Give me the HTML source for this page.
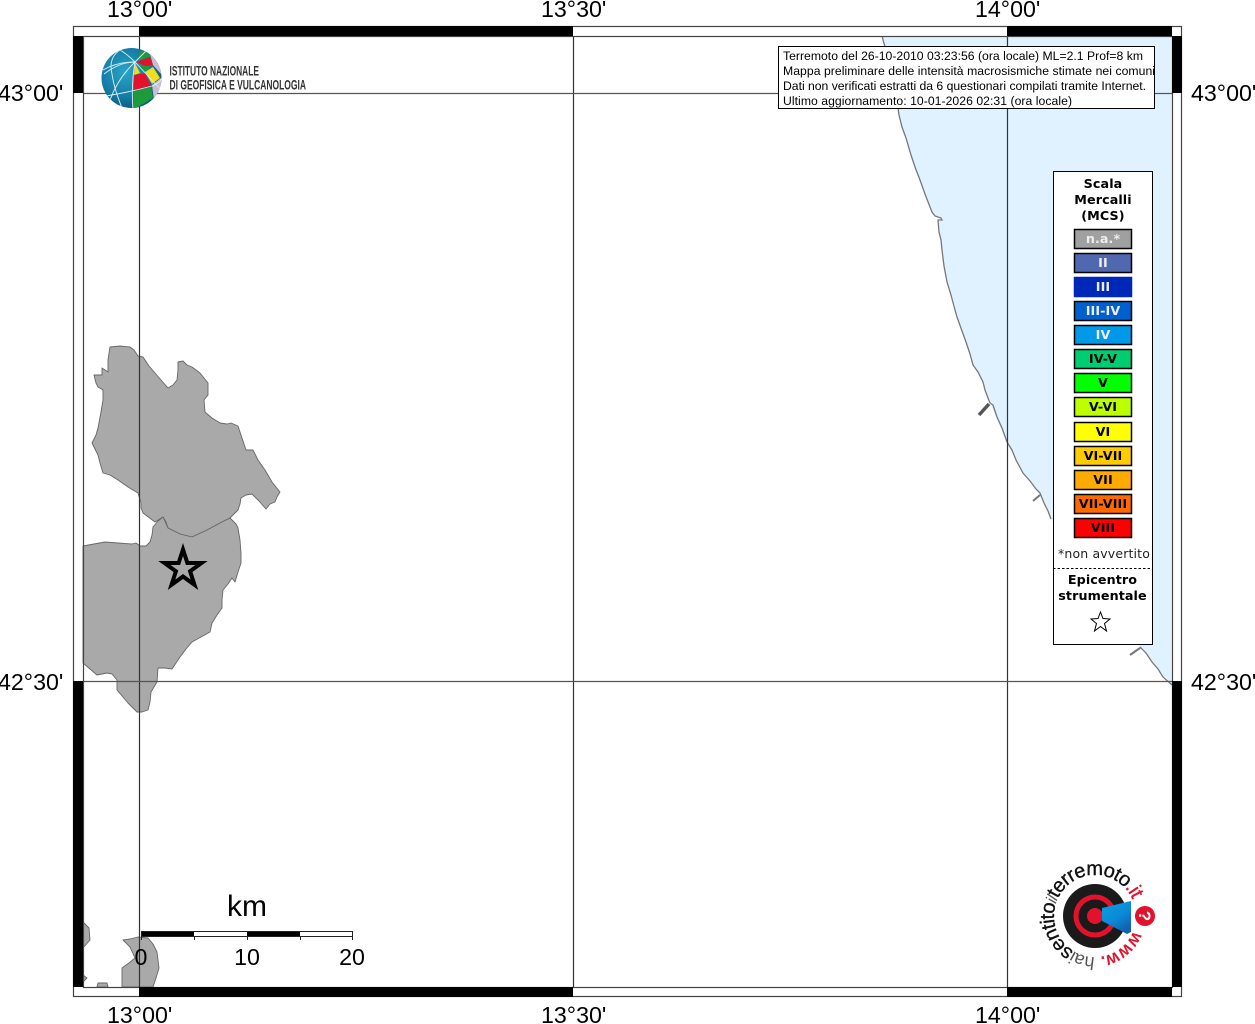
<!DOCTYPE html>
<html><head><meta charset="utf-8"><style>
html,body{margin:0;padding:0;background:#fff;width:1255px;height:1024px;overflow:hidden}
svg{display:block;filter:blur(.3px)}
.t{font-family:"Liberation Sans",Arial,sans-serif;font-size:23.2px;fill:#000}
.i{font-family:"Liberation Sans",Arial,sans-serif;font-size:12.2px;fill:#000}
.l{font-family:"DejaVu Sans",sans-serif;font-size:12.7px;font-weight:bold;text-anchor:middle;letter-spacing:.1px;fill:#000}
.w{fill:#eee}
.s{stroke:#000;stroke-width:1.5}
</style></head><body>
<svg width="1255" height="1024" viewBox="0 0 1255 1024" xmlns="http://www.w3.org/2000/svg">
<defs>
<radialGradient id="g" cx=".4" cy=".4" r=".7"><stop offset="0" stop-color="#2ba4c8"/><stop offset=".6" stop-color="#137ba5"/><stop offset="1" stop-color="#0b4d70"/></radialGradient>
<linearGradient id="b" x1="0" y1="0" x2=".6" y2="1"><stop offset="0" stop-color="#0aa0e0"/><stop offset=".6" stop-color="#0a8ad8"/><stop offset="1" stop-color="#1560b0"/></linearGradient>
<clipPath id="gc"><circle cx="131.500" cy="78" r="30"/></clipPath>
<clipPath id="ic"><rect x="779" y="47" width="376" height="61"/></clipPath>
<path id="arc" d="M1095 957A41 41 0 1 1 1095 875A41 41 0 1 1 1095 957"/>
</defs>
<!-- sea -->
<polygon fill="#e0f2ff" points="882,36 1172,36 1172,685 1140,647 1051,519 1040,493 1023,473 1007,442 990,403 983,382 973,365 957,317 947,282 942,250 938,220 942,219 935,216 930,207 915,167 902,127 898,108 885,47"/>
<polyline fill="none" stroke="#777" stroke-width="1.3" points="882,36 885,47 898,108 899,115 902,127 906,138 911,155 915,167 920,180 925,194 930,207 932,212 935,216 941,218 942,220 938,220 939,232 941,240 942,250 944,266 947,282 951,295 955,310 957,317 962,331 966,342 970,354 973,365 978,372 983,382 985,390 988,398 990,403 993,405 997,417 1002,428 1007,442 1012,450 1016,460 1023,473 1030,481 1036,489 1040,493 1044,503 1048,511 1051,519"/>
<polyline fill="none" stroke="#777" stroke-width="1.3" points="1140,647 1146,653 1152,662 1158,669 1163,677 1172,685"/>
<path d="M979 415L989 404" stroke="#555" stroke-width="3.5" fill="none"/>
<path d="M1033 501L1040 495M1130 655L1140 648" stroke="#777" stroke-width="2" fill="none"/>
<!-- provinces -->
<g fill="#a9a9a9" stroke="#666" stroke-width=".9" stroke-linejoin="round">
<polygon points="110,347 120,346 130,347 134,350 138,356 143,357 149,366 155,373 161,380 168,388 173,385 177,380 178,370 178,362 183,361 187,365 192,367 200,373 204,378 208,383 208,389 208,395 204,400 205,412 212,418 220,423 227,424 231,423 238,426 242,438 246,450 250,450 253,450 258,460 265,470 272,482 280,492 277,497 275,502 270,504 266,509 259,501 252,494 246,495 241,498 240,504 238,510 230,518 222,522 207,530 192,537 180,534 168,528 166,522 163,517 155,522 143,513 141,508 141,503 138,493 128,487 118,480 110,475 103,473 100,463 98,455 92,443 96,435 98,428 101,412 103,400 103,390 98,387 96,383 94,375 102,375 102,368 108,372 108,360"/>
<polygon points="83,546 94,544 105,542 118,543 132,544 136,543 140,546 146,546 150,542 152,535 153,527 158,521 163,517 168,528 180,534 192,537 207,530 222,522 230,518 236,524 238,528 240,540 241,553 241,563 238,572 235,582 232,578 228,584 223,590 222,600 222,608 217,615 212,623 210,632 201,637 192,642 186,649 180,657 172,669 165,668 158,668 157,682 151,692 150,702 148,710 142,712 137,712 128,703 117,690 117,680 112,674 107,673 97,675 90,669 83,663"/>
<polygon points="123,940 130,939 138,937 148,938 153,944 157,952 159,968 156,978 153,987 122,987 122,968 129,963 135,958 130,947"/>
<polygon points="83,922 89,928 90,940 83,948"/>
<polygon points="83,975 87,978 83,982"/>
<polygon points="97,987 98,983 107,983 108,987"/>
</g>
<!-- grid -->
<path d="M139.500 36V987M573.500 36V987M1007.500 36V987" stroke="#333" stroke-width="1.2" fill="none"/>
<path d="M83 93.500H1172M83 681.500H1172" stroke="#555" stroke-width="1.2" fill="none"/>
<!-- frame -->
<rect x="73.500" y="26.500" width="1108" height="970" fill="none" stroke="#444" stroke-width="1.2"/>
<rect x="83.500" y="36.500" width="1089" height="951" fill="none" stroke="#444" stroke-width="1.2"/>
<g fill="#000">
<rect x="139" y="26" width="434" height="10"/><rect x="1007" y="26" width="165" height="10"/>
<rect x="139" y="987" width="434" height="10"/><rect x="1007" y="987" width="165" height="10"/>
<rect x="73" y="36" width="10" height="57"/><rect x="73" y="681" width="10" height="306"/>
<rect x="1172" y="36" width="10" height="57"/><rect x="1172" y="681" width="10" height="306"/>
</g>
<!-- labels -->
<g class="t">
<text x="107" y="17" class="t">13°00'</text><text x="541" y="17" class="t">13°30'</text><text x="975" y="17" class="t">14°00'</text>
<text x="107" y="1023" class="t">13°00'</text><text x="541" y="1023" class="t">13°30'</text><text x="975" y="1023" class="t">14°00'</text>
<text x="-2" y="101" class="t">43°00'</text><text x="-2" y="690" class="t">42°30'</text>
<text x="1191" y="101" class="t">43°00'</text><text x="1191" y="690" class="t">42°30'</text>
</g>
<!-- star -->
<polygon points="183,549.500 187.380,562.970 201.550,562.970 190.090,571.300 194.460,584.780 183,576.450 171.540,584.780 175.910,571.300 164.450,562.970 178.620,562.970" fill="none" stroke="#000" stroke-width="4" stroke-miterlimit="10"/>
<!-- scale -->
<rect x="141" y="931" width="53" height="6" fill="#000"/><rect x="247" y="931" width="53" height="6" fill="#000"/>
<path d="M141 931.500H352.500V940M141 936.500H352M141.500 931V940M194.500 936V940M247.500 936V940M300.500 936V940" stroke="#222" stroke-width="1" fill="none"/>
<text x="247" y="916" text-anchor="middle" style="font-family:'Liberation Sans',sans-serif;font-size:30px" fill="#000">km</text>
<g style="font-family:'Liberation Sans',sans-serif;font-size:23.200px" text-anchor="middle" fill="#000">
<text x="141" y="965">0</text><text x="247" y="965">10</text><text x="352" y="965">20</text>
</g>
<!-- logo INGV -->
<circle cx="131.500" cy="78" r="30" fill="url(#g)"/>
<g clip-path="url(#gc)">
<polygon fill="#1e9a3c" points="136,61 142,49 151,56 146,58"/>
<polygon fill="#e3122c" points="136,62 150,57 153,65 145,66"/>
<polygon fill="#f2dd1c" points="135,63 140,73 134,75"/>
<polygon fill="#1e9a3c" points="140,66 150,66 145,72 142,72"/>
<polygon fill="#f2dd1c" points="145,72 153,67 160,78 152,84"/>
<polygon fill="#e3122c" points="134,75 145,73 151,86 134,90"/>
<polygon fill="#1e9a3c" points="134,91 151,87 153,98 133,110"/>
<polygon fill="#c9bdd0" points="150,54 160,60 162,75 153,65"/>
<polygon fill="#c9bdd0" points="161,78 152,85 154,100 163,87"/>
<g fill="none" stroke="#d8f0f4" stroke-width=".9">
<path d="M135 62Q125 52 116 48M135 62Q117 62 103 70M135 62Q118 78 110 100M135 62Q131 85 133 110"/>
<path d="M120 50Q108 58 112 74Q114 88 122 108M104 74Q120 62 135 62M106 96Q130 92 152 86Q160 83 162 78"/>
<path d="M135 62L150 47M135 62L163 92"/>
</g>
</g>
<g fill="#333" style="font-family:'Liberation Sans',sans-serif;font-size:14px;font-weight:bold">
<text x="169.500" y="75.500" textLength="89.500" lengthAdjust="spacingAndGlyphs">ISTITUTO NAZIONALE</text>
<text x="169.500" y="89.500" textLength="136.500" lengthAdjust="spacingAndGlyphs">DI GEOFISICA E VULCANOLOGIA</text>
</g>
<!-- info box -->
<rect x="778.500" y="46.500" width="376" height="62" fill="#fff" stroke="#000" stroke-width="1"/>
<g class="i" clip-path="url(#ic)">
<text class="i" x="783" y="60" textLength="360">Terremoto del 26-10-2010 03:23:56 (ora locale) ML=2.1 Prof=8 km</text>
<text class="i" x="783" y="75" textLength="372">Mappa preliminare delle intensità macrosismiche stimate nei comuni</text>
<text class="i" x="783" y="90" textLength="363">Dati non verificati estratti da 6 questionari compilati tramite Internet.</text>
<text class="i" x="783" y="105" textLength="289">Ultimo aggiornamento: 10-01-2026 02:31 (ora locale)</text>
</g>
<!-- legend -->
<rect x="1053.500" y="171.500" width="99" height="473" fill="#fff" stroke="#000" stroke-width="1"/>
<text class="l" x="1103" y="188">Scala</text><text class="l" x="1103" y="204">Mercalli</text><text class="l" x="1103" y="220">(MCS)</text>
<g class="s">
<rect x="1074.500" y="229.500" width="57" height="19" fill="#a0a0a0"/>
<rect x="1074.500" y="253.500" width="57" height="19" fill="#5068b0"/>
<rect x="1074.500" y="277.500" width="57" height="19" fill="#0028b8" stroke="#0028b8"/>
<rect x="1074.500" y="301.500" width="57" height="19" fill="#0060d0"/>
<rect x="1074.500" y="325.500" width="57" height="19" fill="#0098e8"/>
<rect x="1074.500" y="349.500" width="57" height="19" fill="#00cc70"/>
<rect x="1074.500" y="373.500" width="57" height="19" fill="#00ff00"/>
<rect x="1074.500" y="397.500" width="57" height="19" fill="#bbff00"/>
<rect x="1074.500" y="422.500" width="57" height="19" fill="#ffff00"/>
<rect x="1074.500" y="446.500" width="57" height="19" fill="#ffcc00"/>
<rect x="1074.500" y="470.500" width="57" height="19" fill="#ffaa00"/>
<rect x="1074.500" y="494.500" width="57" height="19" fill="#ff6a00"/>
<rect x="1074.500" y="518.500" width="57" height="19" fill="#ff0000"/>
</g>
<text class="l w" x="1103" y="243">n.a.*</text>
<text class="l w" x="1103" y="267">II</text>
<text class="l w" x="1103" y="291">III</text>
<text class="l w" x="1103" y="315">III-IV</text>
<text class="l w" x="1103" y="339">IV</text>
<text class="l" x="1103" y="363">IV-V</text>
<text class="l" x="1103" y="387">V</text>
<text class="l" x="1103" y="411">V-VI</text>
<text class="l" x="1103" y="436">VI</text>
<text class="l" x="1103" y="460">VI-VII</text>
<text class="l" x="1103" y="484">VII</text>
<text class="l" x="1103" y="508">VII-VIII</text>
<text class="l" x="1103" y="532">VIII</text>
<text x="1104" y="558" text-anchor="middle" style="font-family:'DejaVu Sans',sans-serif;font-size:12.500px;letter-spacing:.15px" fill="#222">*non avvertito</text>
<path d="M1053 568.500H1150" stroke="#000" stroke-width="1" stroke-dasharray="2.500 2" fill="none"/>
<text class="l" x="1102.500" y="584">Epicentro</text><text class="l" x="1102.500" y="600">strumentale</text>
<polygon points="1100.500,612 1103,618.500 1110,619 1104.500,623.500 1106.500,631 1100.500,626.500 1094.500,631 1096.500,623.500 1091,619 1098,618.500" fill="#fff" stroke="#000" stroke-width="1"/>
<!-- terremoto logo -->
<circle cx="1095" cy="916" r="32" fill="#1a1a1a"/>
<circle cx="1095" cy="916" r="19" fill="none" stroke="#e3122c" stroke-width="5"/>
<circle cx="1095" cy="916" r="8" fill="#e3122c"/>
<polygon points="1102,908 1131,901 1131,932 1127,934 1102,921" fill="url(#b)"/>
<circle cx="1145" cy="916" r="10" fill="#e3122c"/>
<text x="1145" y="922" text-anchor="middle" fill="#fff" transform="rotate(90 1145 916)" style="font-family:'Liberation Sans',sans-serif;font-size:17px;font-weight:bold">?</text>
<g style="font-family:'Liberation Sans',sans-serif;font-size:20px" fill="#111" stroke="#111" stroke-width=".35">
<text><textPath href="#arc" startOffset="0" textLength="176" lengthAdjust="spacing"><tspan fill="#555" stroke="none" style="font-size:18px">hai</tspan><tspan>sentito</tspan><tspan fill="#555" stroke="none" style="font-size:16px;font-style:italic">il</tspan><tspan>terremoto</tspan><tspan fill="#e3122c" stroke="#e3122c">.it</tspan></textPath></text>
<text style="font-size:18px;font-weight:bold" fill="#e3122c" stroke="none"><textPath href="#arc" startOffset="208" textLength="44" lengthAdjust="spacingAndGlyphs">www.</textPath></text>
</g>
</svg>
</body></html>
